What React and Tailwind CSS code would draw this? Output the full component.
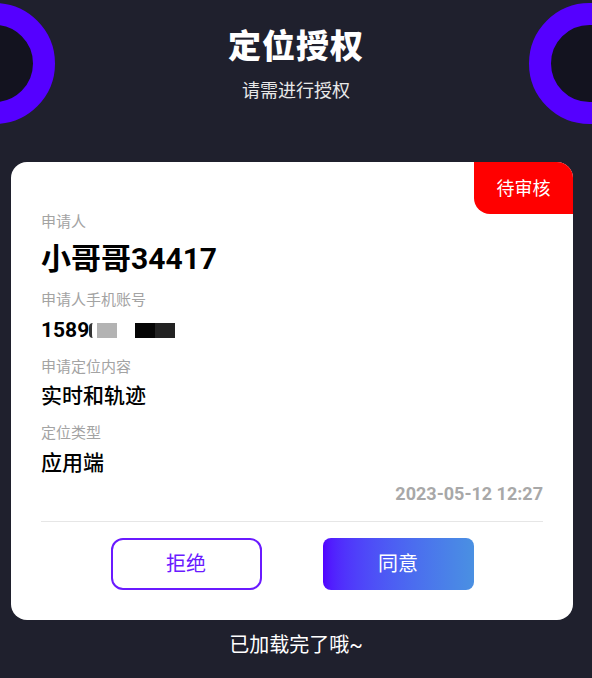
import React from "react";

const font = { fontFamily: "Roboto, 'Noto Sans CJK SC', sans-serif" };

const Label = ({ children, className = "" }) => (
  <p className={`text-[15px] leading-[20px] text-[#a3a3a3] ${className}`}>
    {children}
  </p>
);

const App = () => {
  return (
    <div
      className="relative w-[592px] h-[678px] overflow-hidden bg-[#1f202d] text-black"
      style={font}
    >
      {/* decorative rings */}
      <div className="absolute left-[-66px] top-[3px] w-[121px] h-[121px] rounded-full border-[22px] border-[#5500ff] bg-[#13131f]" />
      <div className="absolute left-[529px] top-[3px] w-[121px] h-[121px] rounded-full border-[22px] border-[#5500ff] bg-[#13131f]" />

      <div className="relative flex flex-col items-center pt-[26px]">
        <h1 className="text-[33px] leading-[42px] font-black text-white tracking-[1px]">
          定位授权
        </h1>
        <p className="mt-[11px] text-[18px] leading-[24px] text-[#e8e8e8]">
          请需进行授权
        </p>
      </div>

      <div className="relative ml-[11px] mr-[19px] mt-[59px] rounded-[16px] bg-white px-[30px] pt-[50px] pb-[30px]">
        <div className="absolute right-0 top-0 w-[99px] h-[52px] flex items-center justify-center bg-[#ff0000] rounded-tr-[16px] rounded-bl-[16px] text-white text-[18px]">
          待审核
        </div>

        <Label>申请人</Label>
        <div className="mt-[9px] text-[30px] leading-[36px] font-bold">
          小哥哥34417
        </div>

        <Label className="mt-[13px]">申请人手机账号</Label>
        <div className="mt-[7px] text-[21px] leading-[26px] font-bold flex items-center">
          <span>1589</span>
          <span className="inline-block w-[4px] h-[15px] rounded-l-full border-l-[3px] border-[#333] mr-[4px]" />
          <span className="inline-block w-[20px] h-[15px] bg-[#b3b3b3]" />
          <span className="inline-block w-[18px] h-[15px] bg-white" />
          <span className="inline-block w-[20px] h-[15px] bg-[#050505]" />
          <span className="inline-block w-[20px] h-[15px] bg-[#222]" />
        </div>

        <Label className="mt-[14px]">申请定位内容</Label>
        <div className="mt-[6px] text-[21px] leading-[26px] font-medium">
          实时和轨迹
        </div>

        <Label className="mt-[14px]">定位类型</Label>
        <div className="mt-[7px] text-[21px] leading-[26px] font-medium">
          应用端
        </div>

        <p className="mt-[8px] text-right text-[18px] leading-[20px] font-bold text-[#a8a8a8]">
          2023-05-12 12:27
        </p>

        <div className="mt-[17px] h-px bg-[#e6e6e6]" />

        <div className="mt-[16px] flex justify-center gap-[61px]">
          <button className="w-[151px] h-[52px] rounded-[12px] border-2 border-[#6a1aff] text-[#6a1aff] text-[20px]">
            拒绝
          </button>
          <button className="w-[151px] h-[52px] rounded-[8px] bg-gradient-to-r from-[#5200ff] to-[#4a90e2] text-white text-[20px]">
            同意
          </button>
        </div>
      </div>

      <p className="mt-[12px] text-center text-[20px] leading-[26px] text-white">
        已加载完了哦~
      </p>
    </div>
  );
};

export default App;
